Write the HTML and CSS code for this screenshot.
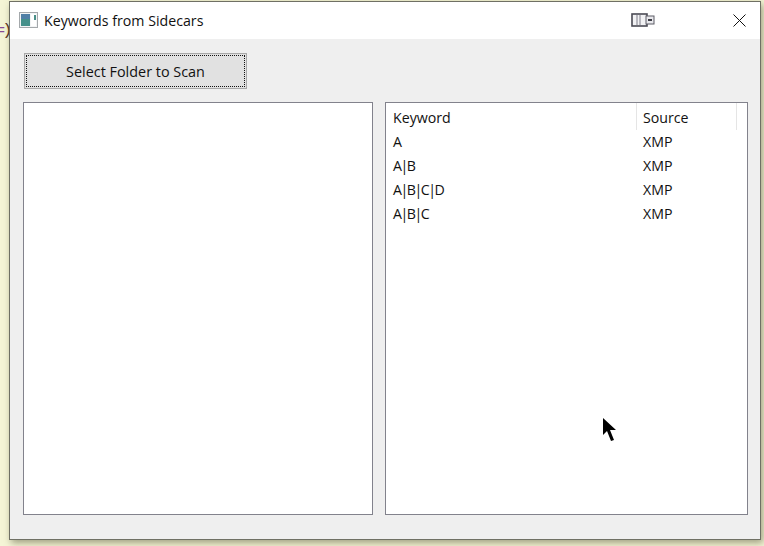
FILE: index.html
```html
<!DOCTYPE html>
<html lang="en">
<head>
<meta charset="utf-8">
<title>Keywords from Sidecars</title>
<link rel="stylesheet" href="styles.css">
</head>
<body>
<div class="desktop">
  <span class="stray"><span class="stray-eq">=</span>)</span>
  <div class="window">
    <header class="titlebar">
      <svg class="app-icon" width="19" height="16" viewBox="0 0 19 16">
        <rect x="0.5" y="0.5" width="18" height="15" fill="#f2f4f5" stroke="#a4a8ab"/>
        <rect x="2" y="2" width="9" height="12" fill="#44908a"/>
        <rect x="2" y="2" width="9" height="5" fill="#4f7fa6"/>
        <rect x="12" y="2" width="5" height="12" fill="#fff"/>
        <rect x="15" y="3" width="2" height="5" fill="#4a8f88"/>
      </svg>
      <span class="title">Keywords from Sidecars</span>
      <svg class="snap-icon" width="24" height="14" viewBox="0 0 24 14">
        <rect x="1" y="1" width="15" height="12" fill="#f2f2f4" stroke="#4a4a54" stroke-width="1.6"/>
        <path d="M6 2v10M9 2v10" stroke="#a5a5ad" stroke-width="1.5"/>
        <rect x="15" y="3" width="8" height="8" fill="#e8e8ec" stroke="#5c5c66"/>
        <rect x="17" y="6" width="4" height="2" fill="#3c3c44"/>
      </svg>
      <svg class="close-icon" width="13" height="13" viewBox="0 0 13 13">
        <path d="M.5.500l12 12M12.500 .500l-12 12" stroke="#111" stroke-width="1" fill="none"/>
      </svg>
    </header>
    <main class="content">
      <button class="scan-button" type="button"><span class="scan-label">Select Folder to Scan</span></button>
      <div class="panes">
        <div class="pane tree-pane"></div>
        <div class="pane list-pane">
          <div class="row head">
            <div class="cell key">Keyword</div>
            <div class="cell src">Source</div>
          </div>
          <div class="row"><div class="cell key">A</div><div class="cell src">XMP</div></div>
          <div class="row"><div class="cell key">A<span class="pipe">|</span>B</div><div class="cell src">XMP</div></div>
          <div class="row"><div class="cell key">A<span class="pipe">|</span>B<span class="pipe">|</span>C<span class="pipe">|</span>D</div><div class="cell src">XMP</div></div>
          <div class="row"><div class="cell key">A<span class="pipe">|</span>B<span class="pipe">|</span>C</div><div class="cell src">XMP</div></div>
        </div>
      </div>
    </main>
  </div>
  <svg class="cursor" width="14" height="24" viewBox="0 0 14 24">
    <path d="M0 0v17l4-4 4 10 3-1-4-10h6z" fill="#000"/>
  </svg>
</div>
</body>
</html>
```
FILE: styles.css
```css
* { box-sizing: border-box; }
html, body { margin: 0; height: 100%; }
body { overflow: hidden; background: #f5f5d6; font-family: "Open Sans", "Noto Sans", sans-serif; color: #111; }
.desktop { position: relative; width: 764px; height: 546px; padding: 1px 0 0 9px; overflow: hidden; }
.stray { position: absolute; left: -5px; top: 21px; font: 17px "Liberation Mono", monospace; letter-spacing: -3px; color: #5a3524; }
.stray-eq { color: #8a4a96; }
.window {
  position: relative;
  width: 752px;
  height: 539px;
  border: 1px solid #6f7064;
  background: #efefef;
  box-shadow: 2px 3px 7px rgba(90, 90, 60, .55);
  display: flex;
  flex-direction: column;
}
.titlebar { height: 37px; flex: none; background: #fff; display: flex; align-items: center; padding: 0 14px 0 9px; }
.app-icon { flex: none; margin-top: -1px; }
.title { margin-left: 6px; font-size: 14.2px; margin-top: -1px; }
.snap-icon { margin-left: auto; margin-top: -1px; margin-right: 91px; }
.close-icon { position: absolute; right: 14px; top: 12px; }
.content { flex: 1; display: flex; flex-direction: column; padding: 14px 11px 24px 13px; }
.scan-button {
  width: 223px;
  height: 36px;
  margin-left: 1px;
  padding: 1px;
  border: 1px solid #a8a8a8;
  background: #e1e1e1;
  font: 14.4px "Open Sans", "Noto Sans", sans-serif;
  color: #111;
}
.scan-label { display: flex; align-items: center; justify-content: center; height: 100%; border: 1px dotted #111; }
.panes { flex: 1; display: flex; gap: 12px; margin-top: 13px; }
.pane { background: #fff; border: 1px solid #82828c; }
.tree-pane { width: 350px; }
.list-pane { width: 363px; }
.row { display: flex; height: 24px; font-size: 14.2px; line-height: 24px; }
.row.head { height: 27px; line-height: 30px; }
.cell { padding-left: 7px; white-space: nowrap; }
.key { width: 251px; }
.src { width: 100px; padding-left: 6px; }
.head .cell { border-right: 1px solid #e5e5e5; }
.pipe { margin: 0 -1.5px; }
.cursor { position: absolute; left: 603px; top: 418px; }
```
